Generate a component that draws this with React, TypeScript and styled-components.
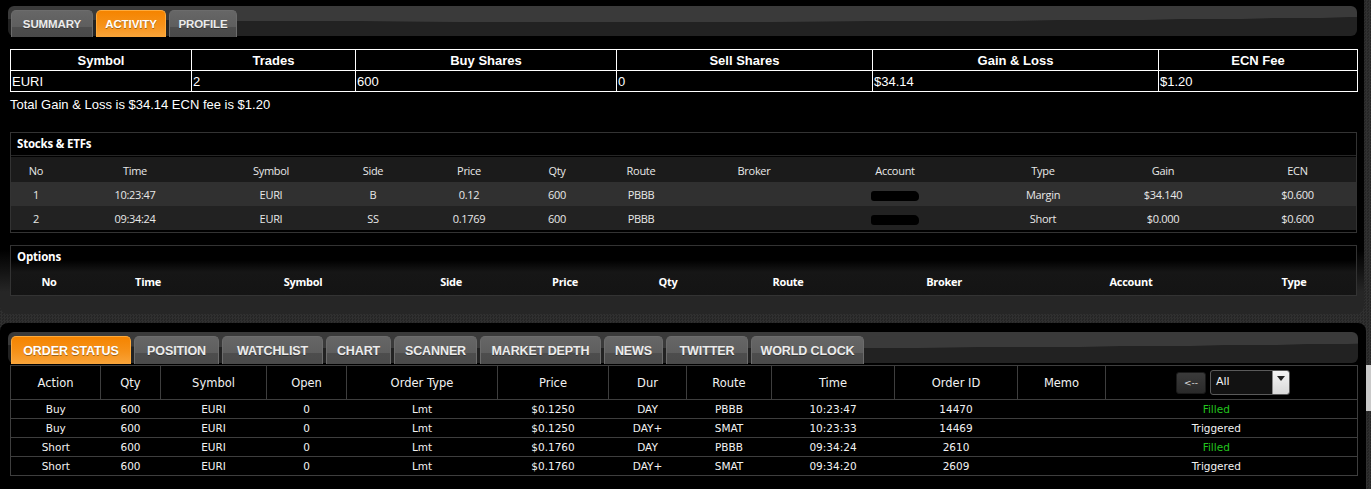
import styled, { createGlobalStyle } from 'styled-components'

const GlobalStyle = createGlobalStyle`
  html, body {
    margin: 0;
    padding: 0;
  }
  body {
    background-color: #2a2a2a;
    background-image: repeating-conic-gradient(#303030 0 25%, #252525 0 50%);
    background-size: 3px 3px;
    font-family: "Liberation Sans", Arial, sans-serif;
    color: #fff;
  }
`

// ─── Layout ──────────────────────────────────────────────────────────────────

const Page = styled.div`
  display: flex;
  height: 489px;
  overflow: hidden;
`

const Main = styled.div`
  width: 1366px;
  display: flex;
  flex-direction: column;
  gap: 9px;
`

const Gutter = styled.div`
  flex: 1;
  display: flex;
  flex-direction: column;
`

const Thumb = styled.div`
  margin-top: 365px;
  height: 46px;
  background: #c9c9c9;
`

const TopPanel = styled.section`
  width: 1364px;
  height: 314px;
  box-sizing: border-box;
  padding: 6px 7px 0 8px;
  border-radius: 0 0 8px 8px;
  background: linear-gradient(#000 0, #000 250px, #262626 292px, #262626 100%);
`

const BottomPanel = styled.section`
  flex: 1;
  box-sizing: border-box;
  padding: 9px 8px 0 8px;
  border-radius: 8px 8px 0 0;
  background: #000;
`

// ─── Tabs ────────────────────────────────────────────────────────────────────

const TabBar = styled.div<{ $h: number }>`
  height: ${({ $h }) => $h}px;
  border-radius: 6px;
  display: flex;
  align-items: flex-end;
  gap: 3px;
  padding: 0 3px;
  background:
    radial-gradient(ellipse 140% 95% at 45% 0%, #3a3a3a 0 55%, transparent 56%),
    #222;
`

const Tab = styled.div<{ $active?: boolean; $h: number; $w: number; $size: number }>`
  width: ${({ $w }) => $w}px;
  height: ${({ $h }) => $h}px;
  box-sizing: border-box;
  display: flex;
  align-items: center;
  justify-content: center;
  white-space: nowrap;
  margin-bottom: -1px;
  border-radius: 5px 5px 0 0;
  font-size: ${({ $size }) => $size}px;
  font-weight: 700;
  letter-spacing: -0.1px;
  text-transform: uppercase;
  color: ${({ $active }) => ($active ? '#fff' : '#ececec')};
  text-shadow: 0 1px 0 rgba(0, 0, 0, 0.35);
  border: 1px solid ${({ $active }) => ($active ? '#ffab3c' : '#6c6c6c')};
  border-bottom: none;
  background: ${({ $active }) =>
    $active
      ? 'linear-gradient(#f58400, #f6921a 55%, #f8a43a)'
      : 'linear-gradient(#666 0, #5e5e5e 60%, #4d4d4d 61%, #4a4a4a 100%)'};
`

// ─── Summary ─────────────────────────────────────────────────────────────────

const SummaryTable = styled.table`
  margin: 13px 0 0 2px;
  width: 1347px;
  border-collapse: collapse;
  table-layout: fixed;
  font-size: 13px;

  th, td {
    border: 1px solid #fff;
    height: 20px;
    padding: 0 1px;
  }
  th {
    font-weight: 700;
    text-align: center;
  }
  td {
    text-align: left;
  }
`

const TotalLine = styled.div`
  margin: 5px 0 0 2px;
  font-size: 13px;
  height: 16px;
  line-height: 16px;
`

// ─── Trade boxes ─────────────────────────────────────────────────────────────

const Box = styled.div<{ $top: number; $fade?: boolean }>`
  margin: ${({ $top }) => $top}px 0 0 2px;
  width: 1347px;
  box-sizing: border-box;
  border: 1px solid #333;
  padding-bottom: 2px;
  font-family: "Open Sans", "Noto Sans", sans-serif;
  background: ${({ $fade }) => ($fade ? 'linear-gradient(#000 0, #000 14px, #161616 26px, #141414)' : '#000')};
`

const BoxTitle = styled.div<{ $line?: boolean }>`
  height: 22px;
  line-height: 22px;
  padding-left: 6px;
  font-size: 11.5px;
  font-weight: 700;
  letter-spacing: -0.2px;
  border-bottom: ${({ $line }) => ($line ? '1px solid #262626' : 'none')};
  margin-bottom: ${({ $line }) => ($line ? '1px' : '0')};
`

const Row = styled.div<{ $cols: string; $bg: string; $h: number; $bold?: boolean }>`
  display: grid;
  grid-template-columns: ${({ $cols }) => $cols};
  height: ${({ $h }) => $h}px;
  padding-top: 1px;
  box-sizing: border-box;
  align-items: center;
  background: ${({ $bg }) => $bg};
  font-size: 11px;
  font-weight: ${({ $bold }) => ($bold ? 700 : 400)};
  letter-spacing: -0.3px;
  color: ${({ $bold }) => ($bold ? '#fff' : '#e8e8e8')};
`

const Cell = styled.div<{ $pl?: number }>`
  text-align: center;
  padding-left: ${({ $pl }) => $pl ?? 0}px;
  white-space: nowrap;
`

const Redacted = styled.span`
  display: inline-block;
  width: 48px;
  height: 10px;
  border-radius: 3px 5px 4px 3px;
  background: #000;
  vertical-align: middle;
`

// ─── Order status ────────────────────────────────────────────────────────────

const OrderTable = styled.table`
  margin: 2px 0 0 2px;
  width: 1347px;
  border-collapse: collapse;
  table-layout: fixed;
  font-family: "DejaVu Sans", Verdana, sans-serif;
  color: #f2f2f2;

  th {
    height: 33px;
    border: 1px solid #3e3e3e;
    font-size: 11.5px;
    font-weight: 400;
    text-align: center;
    padding: 0;
  }
  td {
    height: 18px;
    border-top: 1px solid #3e3e3e;
    border-bottom: 1px solid #3e3e3e;
    font-size: 10.5px;
    text-align: center;
    padding: 0;
  }
  td:first-child { border-left: 1px solid #3e3e3e; }
  td:last-child { border-right: 1px solid #3e3e3e; }
`

const Status = styled.td<{ $filled?: boolean }>`
  && {
    color: ${({ $filled }) => ($filled ? '#22c41e' : '#f2f2f2')};
    padding-right: 30px;
  }
`

const HeadTools = styled.div`
  display: flex;
  align-items: center;
  gap: 4px;
  padding-left: 70px;
`

const BackButton = styled.button`
  width: 30px;
  height: 22px;
  padding: 0;
  border: 1px solid #1a1a1a;
  border-radius: 3px;
  background: linear-gradient(#3a3a3a, #2a2a2a);
  color: #ddd;
  font-family: "DejaVu Sans", sans-serif;
  font-size: 9px;
`

const Select = styled.div`
  width: 80px;
  height: 25px;
  box-sizing: border-box;
  display: flex;
  border: 1px solid #5a5a5a;
  border-radius: 3px;
  background: #121212;
  overflow: hidden;
  font-family: "DejaVu Sans", sans-serif;
  font-size: 11px;
  text-align: left;
`

const SelectValue = styled.span`
  flex: 1;
  padding: 4px 0 0 5px;
`

const SelectArrow = styled.span`
  width: 16px;
  background: linear-gradient(#f4f4f4, #d8d8d8);
  border-left: 1px solid #888;
  display: flex;
  align-items: center;
  justify-content: center;

  &::after {
    content: '';
    border-left: 4px solid transparent;
    border-right: 4px solid transparent;
    border-top: 5px solid #222;
    margin-top: -8px;
  }
`

// ─── Data ────────────────────────────────────────────────────────────────────

const STOCK_COLS = '50px 148px 124px 80px 112px 64px 104px 122px 160px 136px 104px 1fr'
const OPTION_COLS = '76px 122px 188px 108px 120px 86px 154px 158px 216px 110px 1fr'

const stockHead = ['No', 'Time', 'Symbol', 'Side', 'Price', 'Qty', 'Route', 'Broker', 'Account', 'Type', 'Gain', 'ECN']
const stockRows = [
  ['1', '10:23:47', 'EURI', 'B', '0.12', '600', 'PBBB', '', '#', 'Margin', '$34.140', '$0.600'],
  ['2', '09:34:24', 'EURI', 'SS', '0.1769', '600', 'PBBB', '', '#', 'Short', '$0.000', '$0.600'],
]
const optionHead = ['No', 'Time', 'Symbol', 'Side', 'Price', 'Qty', 'Route', 'Broker', 'Account', 'Type', '']

const orderCols = [90, 60, 106, 80, 151, 111, 78, 85, 123, 123, 88, 252]
const orderHead = ['Action', 'Qty', 'Symbol', 'Open', 'Order Type', 'Price', 'Dur', 'Route', 'Time', 'Order ID', 'Memo']
const orders = [
  ['Buy', '600', 'EURI', '0', 'Lmt', '$0.1250', 'DAY', 'PBBB', '10:23:47', '14470', '', 'Filled'],
  ['Buy', '600', 'EURI', '0', 'Lmt', '$0.1250', 'DAY+', 'SMAT', '10:23:33', '14469', '', 'Triggered'],
  ['Short', '600', 'EURI', '0', 'Lmt', '$0.1760', 'DAY', 'PBBB', '09:34:24', '2610', '', 'Filled'],
  ['Short', '600', 'EURI', '0', 'Lmt', '$0.1760', 'DAY+', 'SMAT', '09:34:20', '2609', '', 'Triggered'],
]

const topTabs: [string, number][] = [['Summary', 82], ['Activity', 70], ['Profile', 68]]
const bottomTabs: [string, number][] = [
  ['Order Status', 120], ['Position', 85], ['Watchlist', 101], ['Chart', 65], ['Scanner', 83],
  ['Market Depth', 121], ['News', 59], ['Twitter', 82], ['World Clock', 113],
]

export default function App() {
  return (
    <>
      <GlobalStyle />
      <Page>
        <Main>
          <TopPanel>
            <TabBar $h={30}>
              {topTabs.map(([t, w]) => (
                <Tab key={t} $w={w} $h={27} $size={11.5} $active={t === 'Activity'}>{t}</Tab>
              ))}
            </TabBar>

            <SummaryTable>
              <colgroup>
                {[181, 164, 261, 256, 286, 199].map((w, i) => <col key={i} style={{ width: w }} />)}
              </colgroup>
              <thead>
                <tr>
                  <th>Symbol</th><th>Trades</th><th>Buy Shares</th><th>Sell Shares</th><th>Gain &amp; Loss</th><th>ECN Fee</th>
                </tr>
              </thead>
              <tbody>
                <tr>
                  <td>EURI</td><td>2</td><td>600</td><td>0</td><td>$34.14</td><td>$1.20</td>
                </tr>
              </tbody>
            </SummaryTable>
            <TotalLine>Total Gain &amp; Loss is $34.14 ECN fee is $1.20</TotalLine>

            <Box $top={19}>
              <BoxTitle $line>Stocks &amp; ETFs</BoxTitle>
              <Row $cols={STOCK_COLS} $bg="#1b1b1b" $h={25}>
                {stockHead.map((h, i) => <Cell key={h} $pl={i === 11 ? 24 : 0}>{h}</Cell>)}
              </Row>
              {stockRows.map((r, ri) => (
                <Row key={ri} $cols={STOCK_COLS} $bg={ri === 0 ? '#303030' : '#222'} $h={24}>
                  {r.map((c, i) => (
                    <Cell key={i} $pl={i === 11 ? 24 : 0}>{c === '#' ? <Redacted /> : c}</Cell>
                  ))}
                </Row>
              ))}
            </Box>

            <Box $top={12} $fade>
              <BoxTitle>Options</BoxTitle>
              <Row $cols={OPTION_COLS} $bg="transparent" $h={25} $bold>
                {optionHead.map((h, i) => <Cell key={i}>{h}</Cell>)}
              </Row>
            </Box>
          </TopPanel>

          <BottomPanel>
            <TabBar $h={31}>
              {bottomTabs.map(([t, w]) => (
                <Tab key={t} $w={w} $h={28} $size={12.5} $active={t === 'Order Status'}>{t}</Tab>
              ))}
            </TabBar>

            <OrderTable>
              <colgroup>
                {orderCols.map((w, i) => <col key={i} style={{ width: w }} />)}
              </colgroup>
              <thead>
                <tr>
                  {orderHead.map((h) => <th key={h}>{h}</th>)}
                  <th>
                    <HeadTools>
                      <BackButton>&lt;--</BackButton>
                      <Select>
                        <SelectValue>All</SelectValue>
                        <SelectArrow />
                      </Select>
                    </HeadTools>
                  </th>
                </tr>
              </thead>
              <tbody>
                {orders.map((o, ri) => (
                  <tr key={ri}>
                    {o.slice(0, 11).map((c, i) => <td key={i}>{c}</td>)}
                    <Status $filled={o[11] === 'Filled'}>{o[11]}</Status>
                  </tr>
                ))}
              </tbody>
            </OrderTable>
          </BottomPanel>
        </Main>
        <Gutter>
          <Thumb />
        </Gutter>
      </Page>
    </>
  )
}
